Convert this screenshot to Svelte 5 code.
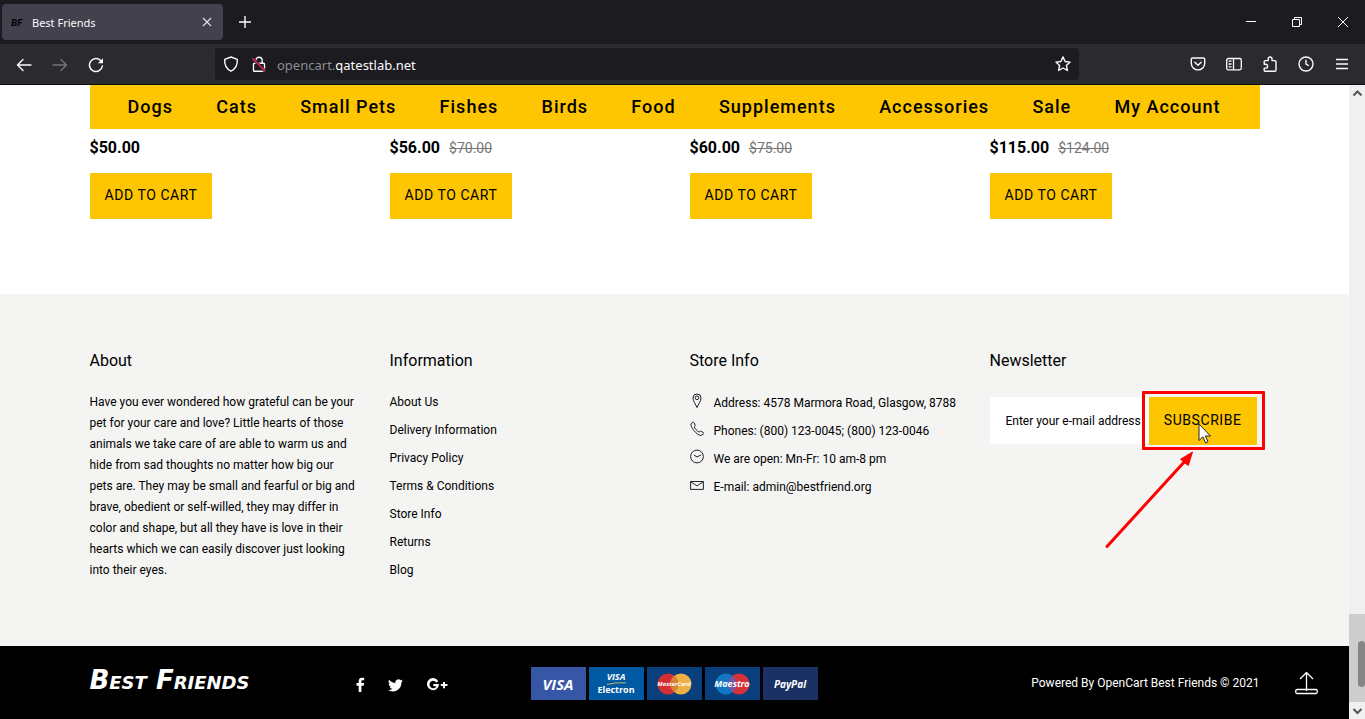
<script>
  const menu = ['Dogs', 'Cats', 'Small Pets', 'Fishes', 'Birds', 'Food', 'Supplements', 'Accessories', 'Sale', 'My Account'];
  const products = [
    { price: '$50.00' },
    { price: '$56.00', old: '$70.00' },
    { price: '$60.00', old: '$75.00' },
    { price: '$115.00', old: '$124.00' }
  ];
  const links = ['About Us', 'Delivery Information', 'Privacy Policy', 'Terms & Conditions', 'Store Info', 'Returns', 'Blog'];
</script>

<div class="browser">
  <div class="tabs">
    <div class="tab">
      <span class="favicon">BF</span>
      <span class="title">Best Friends</span>
      <button aria-label="Close tab">
        <svg width="10" height="10" viewBox="0 0 10 10"><path d="M1 1l8 8M9 1l-8 8" stroke="#e4e4ea" stroke-width="1.1" /></svg>
      </button>
    </div>
    <button class="new" aria-label="New tab">
      <svg width="12" height="12" viewBox="0 0 12 12"><path d="M6 0v12M0 6h12" stroke="#fbfbfe" stroke-width="1.4" /></svg>
    </button>
    <div class="window">
      <button aria-label="Minimize"><svg width="10" height="10" viewBox="0 0 10 10"><path d="M0 4.5h10" stroke="#fff" /></svg></button>
      <button aria-label="Restore"><svg width="10" height="10" viewBox="0 0 10 10" fill="none" stroke="#fff"><path d="M.5 2.5h7v7h-7zM2.5 2.5v-2h7v7h-2" /></svg></button>
      <button aria-label="Close"><svg width="10" height="10" viewBox="0 0 10 10"><path d="M0 0l10 10M10 0L0 10" stroke="#fff" /></svg></button>
    </div>
  </div>

  <div class="toolbar">
    <div class="history">
      <button aria-label="Back"><svg width="16" height="16" viewBox="0 0 16 16" fill="none" stroke="#fbfbfe" stroke-width="1.4" stroke-linecap="round" stroke-linejoin="round"><path d="M15 8H1.5M7 2.5L1.5 8 7 13.5" /></svg></button>
      <button aria-label="Forward" disabled><svg width="16" height="16" viewBox="0 0 16 16" fill="none" stroke="#737378" stroke-width="1.4" stroke-linecap="round" stroke-linejoin="round"><path d="M1 8h13.5M9 2.5L14.5 8 9 13.5" /></svg></button>
      <button aria-label="Reload"><svg width="16" height="16" viewBox="0 0 16 16" fill="none" stroke="#fbfbfe" stroke-width="1.5" stroke-linecap="round"><path d="M14.4 9A6.5 6.5 0 1 1 12.8 3.7" /><path d="M15 1.2v5.1H9.9z" fill="#fbfbfe" stroke="none" /></svg></button>
    </div>
    <div class="address">
      <svg width="16" height="16" viewBox="0 0 16 16" fill="none" stroke="#fbfbfe" stroke-width="1.4" stroke-linejoin="round"><path d="M8 1l6.3 2.3C14.7 8.5 12.5 13 8 15.2 3.5 13 1.3 8.5 1.7 3.3z" /></svg>
      <svg class="lock" width="16" height="16" viewBox="0 0 16 16" fill="none"><path d="M4.8 7V4.500a3.200 3.200 0 0 1 6.400 0V7M3.500 7.200h9a1 1 0 0 1 1 1v6a1 1 0 0 1-1 1h-9a1 1 0 0 1-1-1v-6a1 1 0 0 1 1-1z" stroke="#fbfbfe" stroke-width="1.4" /><path d="M1.300 2.300l13 13" stroke="#2a1a22" stroke-width="3" /><path d="M1.300 2.300l13 13" stroke="#e22850" stroke-width="1.5" /></svg>
      <span class="url">opencart.<b>qatestlab.net</b></span>
      <button class="star" aria-label="Bookmark this page"><svg width="16" height="16" viewBox="0 0 16 16" fill="none" stroke="#fbfbfe" stroke-width="1.4" stroke-linejoin="round"><path d="M8 .9l2.100 4.600 5 .6-3.700 3.400 1 5L8 12l-4.400 2.500 1-5L.9 6.100l5-.6z" /></svg></button>
    </div>
    <div class="tools">
      <button aria-label="Save to Pocket"><svg width="16" height="16" viewBox="0 0 16 16" fill="none" stroke="#fbfbfe" stroke-width="1.4" stroke-linecap="round" stroke-linejoin="round"><path d="M2.500 2h11a1.200 1.200 0 0 1 1.200 1.200v4a6.700 6.700 0 0 1-13.400 0v-4A1.200 1.200 0 0 1 2.500 2zM4.800 6.300L8 9.300l3.200-3" /></svg></button>
      <button aria-label="Sidebars"><svg width="16" height="16" viewBox="0 0 16 16" fill="none" stroke="#fbfbfe" stroke-width="1.3"><rect x=".7" y="2.500" width="14.600" height="11.300" rx="1.500" /><path d="M7.500 2.500v11.300M2.500 5.200h3M2.500 8h3M2.500 10.800h3" /></svg></button>
      <button aria-label="Extensions"><svg width="16" height="16" viewBox="0 0 16 16" fill="none" stroke="#fbfbfe" stroke-width="1.4" stroke-linejoin="round"><path d="M2.200 7.200V5.600a1 1 0 0 1 1-1h3V2.900a1.900 1.900 0 0 1 3.800 0v1.700h3a1 1 0 0 1 1 1v8.600a1 1 0 0 1-1 1H3.200a1 1 0 0 1-1-1v-2.100h1.500a1.900 1.900 0 0 0 0-3.800H2.200z" /></svg></button>
      <button aria-label="History"><svg width="16" height="16" viewBox="0 0 16 16" fill="none" stroke="#fbfbfe" stroke-width="1.4" stroke-linecap="round"><circle cx="8" cy="8" r="7" /><path d="M8 4.300V8l2.500 1.500" /></svg></button>
      <button aria-label="Menu"><svg width="16" height="16" viewBox="0 0 16 16" stroke="#fbfbfe" stroke-width="1.3"><path d="M2 3.500h12M2 8h12M2 12.500h12" /></svg></button>
    </div>
  </div>

  <div class="viewport">
    <div class="page">
      <main>
        <nav class="container menu">
          {#each menu as item}<a href="#top">{item}</a>{/each}
        </nav>
        <section class="container columns products">
          {#each products as product}
            <article>
              <p><strong>{product.price}</strong>{#if product.old}<s>{product.old}</s>{/if}</p>
              <button class="action">ADD TO CART</button>
            </article>
          {/each}
        </section>
      </main>

      <footer>
        <div class="info">
          <div class="container columns">
            <section>
              <h2>About</h2>
              <p>Have you ever wondered how grateful can be your pet for your care and love? Little hearts of those animals we take care of are able to warm us and hide from sad thoughts no matter how big our pets are. They may be small and fearful or big and brave, obedient or self-willed, they may differ in color and shape, but all they have is love in their hearts which we can easily discover just looking into their eyes.</p>
            </section>
            <section>
              <h2>Information</h2>
              <ul>
                {#each links as link}<li><a href="#top">{link}</a></li>{/each}
              </ul>
            </section>
            <section>
              <h2>Store Info</h2>
              <ul class="store">
                <li><svg width="14" height="16" viewBox="0 0 14 16"><path d="M7 14.500C5.500 11 3 8 3 5a4 4 0 0 1 8 0c0 3-2.500 6-4 9.500z" /><circle cx="7" cy="4.800" r="1.800" /></svg><span>Address: 4578 Marmora Road, Glasgow, 8788</span></li>
                <li><svg width="14" height="16" viewBox="0 0 14 16"><path d="M2.800 1.300L1 2.800c-1 2.700 5.500 11.400 9.800 11.700l2.700-1.500c.5-.5.300-1-.3-1.500l-2.400-1.300c-.7-.3-1 .1-1.600.9C7.500 10.700 4.500 7 4.200 5.800c.7-.5 1.200-.8 1-1.500L4 1.700c-.3-.5-.7-.6-1.200-.4z" /></svg><span>Phones: (800) 123-0045; (800) 123-0046</span></li>
                <li><svg width="14" height="16" viewBox="0 0 14 16"><circle cx="7" cy="7.500" r="6.400" /><path d="M4 6.200l3 1.700 4.200-2" /></svg><span>We are open: Mn-Fr: 10 am-8 pm</span></li>
                <li><svg width="14" height="16" viewBox="0 0 14 16"><path d="M.6 4.500h12.800v7.900H.6zM.8 4.800L7 8.900l6.200-4.100" /></svg><span>E-mail: admin@bestfriend.org</span></li>
              </ul>
            </section>
            <section>
              <h2>Newsletter</h2>
              <form onsubmit={(event) => event.preventDefault()}>
                <input type="email" aria-label="Enter your e-mail address" placeholder="Enter your e-mail address" />
                <div class="subscribe">
                  <button class="action">SUBSCRIBE</button>
                  <span class="highlight"></span>
                  <svg class="arrow" width="92" height="100" viewBox="0 0 92 100"><path d="M3 97.500L82 11" stroke="#f00" stroke-width="3" stroke-linecap="round" /><path d="M88.500 3L84.300 16.500 80.500 13.800 76.600 10.200z" fill="#f00" stroke="#f00" /></svg>
                  <svg class="pointer" width="14" height="22" viewBox="0 0 14 22"><path d="M1 1v16.500l3.900-3.700 2.600 6 2.500-1-2.600-5.800h5.100z" fill="#fff" stroke="#222" stroke-linejoin="round" /></svg>
                </div>
              </form>
            </section>
          </div>
        </div>

        <div class="bottom">
          <div class="container">
            <a class="logo" href="#top">Best Friends</a>
            <div class="social">
              <a href="#top" aria-label="Facebook"><svg width="9" height="16" viewBox="0 0 9 16"><path d="M2.700 15V8.700H.5V6h2.200V4.100C2.700 1.900 4 .7 6 .7c1 0 1.900.1 2.200.2v2.400H6.700c-1.100 0-1.300.5-1.300 1.300V6h2.700l-.4 2.700H5.400V15z" /></svg></a>
              <a href="#top" aria-label="Twitter"><svg width="15" height="13" viewBox="0 0 24 20"><path d="M24 2.400c-.9.400-1.800.7-2.800.8 1-.6 1.800-1.600 2.100-2.700-.9.500-2 1-3.100 1.200A4.900 4.900 0 0 0 11.800 6C7.700 5.900 4.100 3.900 1.700.9a4.900 4.900 0 0 0 1.500 6.600c-.8 0-1.600-.2-2.200-.6 0 2.300 1.600 4.400 3.900 4.900-.7.200-1.500.2-2.200.1.600 2 2.400 3.400 4.600 3.400A9.900 9.900 0 0 1 0 17.300 14 14 0 0 0 7.500 19.500c9.100 0 14.300-7.700 14-14.600 1-.7 1.800-1.500 2.500-2.500z" /></svg></a>
              <a href="#top" aria-label="Google Plus"><svg width="22" height="14" viewBox="0 0 22 14"><path d="M12.200 3.100A6 6 0 1 0 13 6H7.300v2.200h3.200A3.700 3.700 0 1 1 10.400 4.700z" /><path d="M17.100 4h1.900v2.100H21.500V8H19v2.200h-1.900V8h-2.300V6.100h2.300z" /></svg></a>
            </div>
            <div class="payments">
              <span class="visa">VISA</span>
              <span class="electron"><i>VISA</i><svg width="19" height="3" viewBox="0 0 19 3"><path d="M0 2.500Q8 .2 19 .8" fill="none" stroke="#c4b273" /></svg>Electron</span>
              <span class="circles master"><svg width="35" height="22" viewBox="0 0 35 22"><circle cx="11" cy="11" r="10.500" fill="#d42f35" /><circle cx="24" cy="11" r="10.500" fill="#edb044" /><path d="M17.500 2.700a10.500 10.500 0 0 1 0 16.600 10.500 10.500 0 0 1 0-16.600z" fill="#d9803b" /></svg><i>MasterCard</i></span>
              <span class="circles"><svg width="35" height="22" viewBox="0 0 35 22"><circle cx="11" cy="11" r="10.500" fill="#1277c4" /><circle cx="24" cy="11" r="10.500" fill="#d83239" /><path d="M17.500 2.700a10.500 10.500 0 0 1 0 16.600 10.500 10.500 0 0 1 0-16.600z" fill="#7856a0" /></svg><i>Maestro</i></span>
              <span class="paypal">PayPal</span>
            </div>
            <p>Powered By OpenCart Best Friends © 2021</p>
          </div>
          <button class="totop" aria-label="Back to top"><svg width="23" height="24" viewBox="0 0 23 24" fill="none" stroke="#fff" stroke-width="1.3" stroke-linejoin="round"><rect x=".7" y="18.500" width="21.600" height="4" rx="1.500" /><path d="M11.500 20V1.500M5 8l6.500-6.500L18 8" /></svg></button>
        </div>
      </footer>
    </div>

    <div class="scrollbar">
      <svg width="16" height="17" viewBox="0 0 16 17"><path d="M4.500 10.500L8.500 6.500l4 4" /></svg>
      <div class="thumb"><span></span></div>
      <svg width="16" height="17" viewBox="0 0 16 17"><path d="M4.500 7L8.500 11l4-4" /></svg>
    </div>
  </div>
</div>

<style>
  :global(body) { margin: 0; background: #fff; }
  * { box-sizing: border-box; }
  .browser { font-family: Roboto, "Liberation Sans", sans-serif; color: #000; }
  svg { display: block; flex: none; }
  button { border: 0; padding: 0; background: none; font: inherit; color: inherit; cursor: pointer; }
  a { color: inherit; text-decoration: none; }
  p, h2, ul { margin: 0; padding: 0; list-style: none; }

  .tabs { display: flex; align-items: center; height: 44px; padding-left: 2px; background: #1b1b20; }
  .tab { display: flex; align-items: center; width: 221px; height: 36px; padding: 0 11px 0 9px; border-radius: 4px; background: #42414d; color: #fbfbfe; font: 11px "Noto Sans", sans-serif; }
  .favicon { width: 21px; color: #000; font: italic 900 10px Lato, sans-serif; }
  .title { flex: 1; }
  .new { margin-left: 16px; }
  .window { display: flex; gap: 36px; margin-left: auto; padding-right: 17px; }

  .toolbar { display: flex; align-items: center; height: 41px; border-bottom: 1px solid #0c0c0d; background: #2a2a2f; }
  .history { display: flex; gap: 20px; width: 215px; padding: 1px 0 0 16px; }
  .address { display: flex; flex: 0 1 864px; align-items: center; height: 32px; padding: 0 8px; border-radius: 4px; background: #1b1b20; color: #8d8d92; }
  .lock { margin-left: 12px; }
  .url { margin-left: 10px; padding-top: 1px; font: 13px "Noto Sans", sans-serif; }
  .url b { font-weight: 400; color: #fbfbfe; }
  .star { margin-left: auto; }
  .tools { display: flex; gap: 20px; margin-left: auto; padding-right: 15px; }

  .viewport { display: flex; }
  .page { flex: 1; min-width: 0; }
  .container { width: 100%; max-width: 1170px; margin: 0 auto; }
  .columns { display: grid; grid-template-columns: repeat(4, minmax(0, 1fr)); gap: 30px; }
  .menu { display: flex; justify-content: space-between; padding: 0 39px 1px 38px; background: #fdc600; font-size: 18px; font-weight: 500; line-height: 43px; letter-spacing: 1px; white-space: nowrap; }
  .products { padding: 8px 0 75px; }
  .products p { margin-bottom: 15px; font-size: 16px; line-height: 21px; }
  .products strong { font-weight: 700; }
  .products s { margin-left: 9px; font-size: 14px; line-height: 14px; color: #777; }
  .action { height: 46px; padding: 0 15px; background: #fdc600; font-size: 14px; letter-spacing: 0.04em; white-space: nowrap; }
  article .action { padding-bottom: 2px; }

  .info { padding: 57px 0 58px; background: #f4f4f2; font-size: 12px; line-height: 21px; }
  h2 { margin-bottom: 21px; font-size: 16px; font-weight: 400; line-height: 20px; }
  .info li { margin-bottom: 7px; }
  .store li { display: flex; gap: 10px; }
  .store span { padding-top: 1px; white-space: nowrap; margin-bottom: -1px; }
  .store svg { margin-top: 1px; fill: none; stroke: #222; stroke-width: 1; }
  form { display: flex; align-items: flex-start; padding: 5px 3px 0 0; }
  input { flex: 1; min-width: 0; width: 0; height: 47px; border: 0; border-radius: 0; padding: 0 0 0 16px; background: #fff; font: 12px Roboto, sans-serif; }
  input::placeholder { color: #000; opacity: 1; }
  .subscribe { position: relative; }
  .subscribe .action { display: block; height: 48px; padding: 0 15px 2px; }
  .highlight { position: absolute; inset: -6px -8px -5px -7px; border: 3px solid #f00; border-radius: 1px; pointer-events: none; }
  .arrow { position: absolute; left: -45px; top: 52px; pointer-events: none; }
  .pointer { position: absolute; left: 49px; top: 26px; pointer-events: none; }

  .bottom { position: relative; padding: 21px 0 19px; background: #000; color: #fff; font-size: 12px; }
  .bottom .container { display: flex; align-items: center; }
  .logo { width: 266px; padding-bottom: 6px; font: small-caps italic 700 26px/27px "Permanent Marker", "DejaVu Sans", sans-serif; white-space: nowrap; }
  .social { display: flex; align-items: center; gap: 23px; width: 175px; padding-top: 3px; fill: #fff; }
  .payments { display: flex; gap: 3px; }
  .payments > span { display: flex; flex-direction: column; align-items: center; justify-content: center; width: 55px; height: 33px; font-family: "Open Sans", sans-serif; font-weight: 700; }
  .visa { background: #3856a6; font-size: 15px; font-style: italic; }
  .electron { background: #0059a3; font-size: 9px; line-height: 10px; }
  .circles { position: relative; background: #093f7c; }
  .circles i { position: absolute; font-size: 9px; line-height: 12px; }
  .payments .master i { font-size: 6px; }
  .paypal { background: #1b3164; font-size: 10px; font-style: italic; }
  .bottom p { margin-left: auto; padding-bottom: 1px; white-space: nowrap; }
  .totop { position: absolute; right: 31px; top: 25px; }

  .scrollbar { display: flex; flex-direction: column; width: 16px; background: #f0f0f0; }
  .scrollbar svg { fill: none; stroke: #555; stroke-width: 2; }
  .thumb { display: flex; align-items: center; justify-content: flex-end; height: 88px; margin-top: auto; padding-top: 12px; background: #cdcdcd; overflow: hidden; }
  .thumb span { width: 7px; height: 46px; border-radius: 4px; background: #858585; }
</style>
